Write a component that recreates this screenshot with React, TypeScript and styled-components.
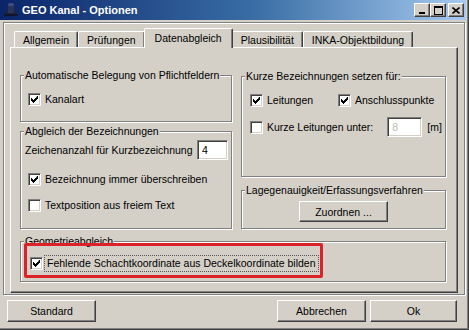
import React from "react";
import styled, { createGlobalStyle, css } from "styled-components";

const GlobalStyle = createGlobalStyle`
  html, body {
    margin: 0;
    padding: 0;
    background: #d4d0c8;
  }
  body {
    font-family: "Liberation Sans", Arial, sans-serif;
    font-size: 10.5px;
    color: #000;
  }
  * {
    box-sizing: border-box;
  }
`;

const Window = styled.div`
    width: 469px;
    height: 330px;
    background: #d4d0c8;
    display: flex;
    flex-direction: column;
    padding-right: 2px;
    border-right: 1px solid #404040;
    border-bottom: 1px solid #404040;
    box-shadow: inset -1px -1px 0 #808080;
`;

const TitleBar = styled.div`
    height: 20px;
    flex-shrink: 0;
    display: flex;
    align-items: center;
    padding: 0 2px 0 3px;
    background: linear-gradient(to right, #0a246a 0%, #3a6ea5 55%, #a6caf0 100%);

    & > .caption {
        flex: 1;
        margin-left: 3px;
        color: #fff;
        font-weight: bold;
        font-size: 11px;
        white-space: nowrap;
    }
`;

const CaptionButtons = styled.div`
    display: flex;
    align-items: center;

    & > :last-child {
        margin-left: 2px;
    }
`;

const CaptionButton = styled.div`
    width: 16px;
    height: 14px;
    background: #d4d0c8;
    border-top: 1px solid #fff;
    border-left: 1px solid #fff;
    border-right: 1px solid #404040;
    border-bottom: 1px solid #404040;
    box-shadow: inset -1px -1px 0 #808080;
    display: flex;
    align-items: center;
    justify-content: center;
`;

const Frame = styled.div`
    margin: 2px 0 0 3px;
    width: 462px;
    height: 273px;
    flex-shrink: 0;
    border: 1px solid #808080;
    box-shadow: inset 1px 1px 0 #fff, 1px 1px 0 #fff;
    padding: 5px 6px 1px 6px;
    display: flex;
    flex-direction: column;
`;

const TabStrip = styled.div`
    height: 20px;
    display: flex;
    align-items: flex-end;
    padding-left: 4px;
    margin-bottom: -1px;
    position: relative;
    z-index: 1;
`;

const Tab = styled.div<{ $active?: boolean }>`
    height: 16px;
    margin-bottom: 1px;
    padding: 0 8px;
    display: flex;
    align-items: center;
    white-space: nowrap;
    background: #d4d0c8;
    border-top: 1px solid #fff;
    border-left: 1px solid #fff;
    border-right: 1px solid #404040;
    box-shadow: inset -1px 0 0 #808080;
    border-radius: 2px 2px 0 0;

    ${p => p.$active && css`
        height: 20px;
        margin: 0 -1px 0 -1px;
        padding: 0 10px 2px;
        position: relative;
        z-index: 2;
    `}
`;

const Panel = styled.div`
    flex: 1;
    border-top: 1px solid #fff;
    border-left: 1px solid #fff;
    border-right: 1px solid #404040;
    border-bottom: 1px solid #404040;
    box-shadow: inset -1px -1px 0 #808080;
    padding: 27px 11px 10px 9px;
    display: grid;
    grid-template-columns: 212px 205px;
    column-gap: 9px;
    row-gap: 12px;
    align-content: start;
`;

const Column = styled.div<{ $gap: number }>`
    display: flex;
    flex-direction: column;
    gap: ${p => p.$gap}px;
`;

const GroupBox = styled.div<{ $grow?: boolean; $pad: string; $span?: boolean }>`
    border: 1px solid #808080;
    box-shadow: inset 1px 1px 0 #fff, 1px 1px 0 #fff;
    padding: ${p => p.$pad};
    display: flex;
    flex-direction: column;
    ${p => p.$grow && css`flex: 1;`}
    ${p => p.$span && css`grid-column: 1 / span 2;`}
`;

const Legend = styled.span`
    align-self: flex-start;
    margin: -7px 0 0 3px;
    padding: 0 1px;
    line-height: 13px;
    background: #d4d0c8;
    white-space: nowrap;
`;

const Row = styled.div<{ $top: number; $left: number }>`
    height: 20px;
    margin-top: ${p => p.$top}px;
    padding-left: ${p => p.$left}px;
    display: flex;
    align-items: center;
    white-space: nowrap;
`;

const CheckItem = styled.label<{ $width?: number }>`
    display: flex;
    align-items: center;
    gap: 4px;
    ${p => p.$width && css`width: ${p.$width}px;`}
`;

const Box = styled.span`
    width: 13px;
    height: 13px;
    flex-shrink: 0;
    background: #fff;
    border: 1px solid;
    border-color: #808080 #fff #fff #808080;
    box-shadow: inset 1px 1px 0 #404040, inset -1px -1px 0 #d4d0c8;
    display: flex;
    align-items: center;
    justify-content: center;
`;

const Field = styled.input<{ $width: number; $dim?: boolean }>`
    width: ${p => p.$width}px;
    height: 20px;
    margin: 0;
    padding: 0 4px;
    font: inherit;
    color: ${p => (p.$dim ? "#c0bcb4" : "#000")};
    background: #fff;
    border: 1px solid;
    border-color: #808080 #fff #fff #808080;
    box-shadow: inset 1px 1px 0 #404040, inset -1px -1px 0 #d4d0c8;
    outline: none;
`;

const Button = styled.div<{ $width: number }>`
    width: ${p => p.$width}px;
    height: 22px;
    background: #d4d0c8;
    border-top: 1px solid #fff;
    border-left: 1px solid #fff;
    border-right: 1px solid #404040;
    border-bottom: 1px solid #404040;
    box-shadow: inset -1px -1px 0 #808080;
    display: flex;
    align-items: center;
    justify-content: center;
`;

const GeoRow = styled.div`
    position: relative;
    height: 20px;
    margin-top: 5px;
    padding-left: 9px;
    display: flex;
    align-items: center;
    gap: 1px;

    & > .focus {
        height: 17px;
        padding: 0 2px;
        display: flex;
        align-items: center;
        border: 1px dotted #555;
        white-space: nowrap;
    }
`;

const Highlight = styled.div`
    position: absolute;
    left: 3px;
    top: -10px;
    width: 299px;
    height: 35px;
    border: 3px solid #dd2129;
    border-radius: 2px;
    pointer-events: none;
`;

const ButtonRow = styled.div`
    margin-top: 5px;
    padding: 0 9px 0 7px;
    display: flex;
    gap: 4px;

    & > :first-child {
        margin-right: auto;
    }
`;

const Check: React.FC<{ checked?: boolean }> = ({ checked }) => (
    <Box>
        {checked && (
            <svg width="7" height="7" viewBox="0 0 7 7">
                <path d="M6 0h1v3h-1v1h-1v1h-1v1h-1v1h-1v-1h-1v-1h-1v-3h1v1h1v1h1v-1h1v-1h1z" fill="#000" />
            </svg>
        )}
    </Box>
);

const AppIcon = () => (
    <svg width="16" height="16" viewBox="0 0 16 16">
        <ellipse cx="8" cy="11" rx="6" ry="3.5" fill="#1c2440" />
        <rect x="5" y="2" width="6" height="9" fill="#2a3358" />
        <ellipse cx="8" cy="2.5" rx="3" ry="1.5" fill="#44507a" />
        <path d="M1 13h14" stroke="#0c1226" strokeWidth="1.5" />
    </svg>
);

const App: React.FC = () => {
    return (
        <Window>
            <GlobalStyle />
            <TitleBar>
                <AppIcon />
                <div className="caption">GEO Kanal - Optionen</div>
                <CaptionButtons>
                    <CaptionButton>
                        <svg width="8" height="8" viewBox="0 0 8 8">
                            <rect x="1" y="6" width="6" height="2" fill="#000" />
                        </svg>
                    </CaptionButton>
                    <CaptionButton>
                        <svg width="9" height="9" viewBox="0 0 9 9">
                            <path d="M0 0h9v9h-9z M1 2v6h7v-6z" fill="#000" fillRule="evenodd" />
                        </svg>
                    </CaptionButton>
                    <CaptionButton>
                        <svg width="8" height="7" viewBox="0 0 8 7">
                            <path d="M0.5 0.5l7 6M7.5 0.5l-7 6" stroke="#000" strokeWidth="1.6" />
                        </svg>
                    </CaptionButton>
                </CaptionButtons>
            </TitleBar>

            <Frame>
                <TabStrip>
                    <Tab>Allgemein</Tab>
                    <Tab>Prüfungen</Tab>
                    <Tab $active>Datenabgleich</Tab>
                    <Tab>Plausibilität</Tab>
                    <Tab>INKA-Objektbildung</Tab>
                </TabStrip>
                <Panel>
                    <Column $gap={9}>
                        <GroupBox $pad="0 0 12px 0">
                            <Legend>Automatische Belegung von Pflichtfeldern</Legend>
                            <Row $top={7} $left={7}>
                                <CheckItem><Check checked />Kanalart</CheckItem>
                            </Row>
                        </GroupBox>
                        <GroupBox $pad="0 3px 13px 0">
                            <Legend>Abgleich der Bezeichnungen</Legend>
                            <Row $top={2} $left={4}>
                                Zeichenanzahl für Kurzbezeichnung
                                <Field $width={31} style={{ marginLeft: "auto" }} readOnly value="4" />
                            </Row>
                            <Row $top={9} $left={7}>
                                <CheckItem><Check checked />Bezeichnung immer überschreiben</CheckItem>
                            </Row>
                            <Row $top={6} $left={7}>
                                <CheckItem><Check />Textposition aus freiem Text</CheckItem>
                            </Row>
                        </GroupBox>
                    </Column>

                    <Column $gap={13}>
                        <GroupBox $grow $pad="0 0 0 0" style={{ marginTop: 1 }}>
                            <Legend>Kurze Bezeichnungen setzen für:</Legend>
                            <Row $top={7} $left={8}>
                                <CheckItem $width={88}><Check checked />Leitungen</CheckItem>
                                <CheckItem><Check checked />Anschlusspunkte</CheckItem>
                            </Row>
                            <Row $top={7} $left={8}>
                                <CheckItem><Check />Kurze Leitungen unter:</CheckItem>
                                <Field $width={35} $dim readOnly value="8" style={{ marginLeft: 14 }} />
                                <span style={{ marginLeft: 5 }}>[m]</span>
                            </Row>
                        </GroupBox>
                        <GroupBox $pad="0 0 6px 0">
                            <Legend>Lagegenauigkeit/Erfassungsverfahren</Legend>
                            <Button $width={89} style={{ height: 21, marginTop: 4, alignSelf: "center" }}>Zuordnen ...</Button>
                        </GroupBox>
                    </Column>

                    <GroupBox $span $pad="0 0 8px 0">
                        <Legend>Geometrieabgleich</Legend>
                        <GeoRow>
                            <Check checked />
                            <span className="focus">Fehlende Schachtkoordinate aus Deckelkoordinate bilden</span>
                            <Highlight />
                        </GeoRow>
                    </GroupBox>
                </Panel>
            </Frame>

            <ButtonRow>
                <Button $width={89}>Standard</Button>
                <Button $width={89}>Abbrechen</Button>
                <Button $width={87}>Ok</Button>
            </ButtonRow>
        </Window>
    );
};

export default App;
